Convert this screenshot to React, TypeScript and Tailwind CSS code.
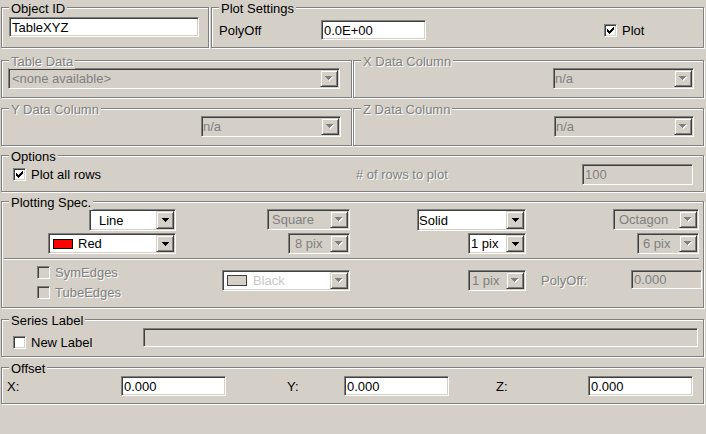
import React from "react";

const SUNKEN =
  "border border-t-[#808080] border-l-[#808080] border-b-white border-r-white shadow-[inset_1px_1px_0_#404040,inset_-1px_-1px_0_#d4d0c8]";
const RAISED =
  "border border-t-[#d4d0c8] border-l-[#d4d0c8] border-b-[#404040] border-r-[#404040] shadow-[inset_1px_1px_0_#fff,inset_-1px_-1px_0_#808080] bg-[#d4d0c8]";
const ETCHED =
  "relative border border-[#808080] shadow-[1px_1px_0_#fff,inset_1px_1px_0_#fff]";
const DIS_TEXT = "text-[#808080] [text-shadow:1px_1px_0_#fff]";

function Group({
  label,
  disabled,
  className = "",
  children,
}: {
  label: string;
  disabled?: boolean;
  className?: string;
  children?: React.ReactNode;
}) {
  return (
    <div className={`${ETCHED} ${className}`}>
      <span
        className={`absolute left-[7px] top-[-7px] px-[2px] bg-[#d4d0c8] whitespace-nowrap ${
          disabled ? DIS_TEXT : "text-black"
        }`}
      >
        {label}
      </span>
      {children}
    </div>
  );
}

function Arrow({ disabled }: { disabled?: boolean }) {
  if (disabled) {
    return (
      <svg width="8" height="5" viewBox="0 0 8 5" shapeRendering="crispEdges">
        <polygon points="1,1 8,1 5,5 4,5" fill="#ffffff" />
        <polygon points="0,0 7,0 4,4 3,4" fill="#808080" />
      </svg>
    );
  }
  return (
    <svg width="7" height="4" viewBox="0 0 7 4" shapeRendering="crispEdges">
      <polygon points="0,0 7,0 4,4 3,4" fill="#000000" />
    </svg>
  );
}

function Combo({
  className = "",
  text,
  disabled,
  white,
  pl = "",
  swatch,
}: {
  className?: string;
  text: string;
  disabled?: boolean;
  white?: boolean;
  pl?: string;
  swatch?: React.ReactNode;
}) {
  const bg = disabled && !white ? "bg-[#d4d0c8]" : "bg-white";
  const tc = disabled ? (white ? "text-[#c8c8c8]" : "text-[#808080]") : "text-black";
  return (
    <div className={`${SUNKEN} ${bg} p-[1px] flex shrink-0 ${className}`}>
      <div
        className={`flex-1 min-w-0 flex items-center overflow-hidden whitespace-nowrap ${pl} ${tc}`}
      >
        {swatch}
        {text}
      </div>
      <div className={`${RAISED} w-[18px] shrink-0 flex items-center justify-center`}>
        <Arrow disabled={disabled} />
      </div>
    </div>
  );
}

function Field({
  className = "",
  value,
  disabled,
}: {
  className?: string;
  value: string;
  disabled?: boolean;
}) {
  return (
    <div
      className={`${SUNKEN} flex items-center shrink-0 pl-[2px] whitespace-nowrap overflow-hidden ${
        disabled ? "bg-[#d4d0c8] text-[#808080]" : "bg-white text-black"
      } ${className}`}
    >
      {value}
    </div>
  );
}

function Check({ checked, disabled }: { checked?: boolean; disabled?: boolean }) {
  return (
    <div
      className={`${SUNKEN} w-[13px] h-[13px] shrink-0 flex items-center justify-center ${
        disabled ? "bg-[#d4d0c8]" : "bg-white"
      }`}
    >
      {checked && (
        <svg width="7" height="7" viewBox="0 0 7 7" shapeRendering="crispEdges">
          <rect x="6" y="0" width="1" height="1" fill="#000" />
          <rect x="5" y="1" width="2" height="1" fill="#000" />
          <rect x="0" y="2" width="1" height="1" fill="#000" />
          <rect x="4" y="2" width="3" height="1" fill="#000" />
          <rect x="0" y="3" width="2" height="1" fill="#000" />
          <rect x="3" y="3" width="3" height="1" fill="#000" />
          <rect x="0" y="4" width="5" height="1" fill="#000" />
          <rect x="1" y="5" width="3" height="1" fill="#000" />
          <rect x="2" y="6" width="1" height="1" fill="#000" />
        </svg>
      )}
    </div>
  );
}

export default function App() {
  return (
    <div className="w-[706px] h-[434px] overflow-hidden bg-[#d4d0c8] pl-[1px] pt-[7px] text-[13px] leading-[15px] text-black font-['Liberation_Sans',Arial,sans-serif]">
      {/* Row 1 */}
      <div className="flex">
        <Group label="Object ID" className="w-[208px] h-[41px]">
          <Field className="ml-[7px] mt-[9px] w-[190px] h-[20px]" value="TableXYZ" />
        </Group>
        <Group label="Plot Settings" className="ml-[2px] w-[493px] h-[41px]">
          <div className="flex items-center mt-[12px] h-[20px]">
            <span className="ml-[7px] w-[102px] shrink-0">PolyOff</span>
            <Field className="w-[105px] h-[20px]" value="0.0E+00" />
            <div className="ml-[178px]">
              <Check checked />
            </div>
            <span className="ml-[5px]">Plot</span>
          </div>
        </Group>
      </div>

      {/* Row 2 */}
      <div className="flex mt-[12px]">
        <Group label="Table Data" disabled className="w-[351px] h-[38px]">
          <Combo
            className="ml-[6px] mt-[7px] w-[332px] h-[21px]"
            text="<none available>"
            disabled
            pl="pl-[2px]"
          />
        </Group>
        <Group label="X Data Column" disabled className="ml-[1px] w-[351px] h-[38px]">
          <Combo className="ml-[199px] mt-[7px] w-[141px] h-[21px]" text="n/a" disabled />
        </Group>
      </div>

      {/* Row 3 */}
      <div className="flex mt-[10px]">
        <Group label="Y Data Column" disabled className="w-[351px] h-[38px]">
          <Combo className="ml-[199px] mt-[7px] w-[140px] h-[21px]" text="n/a" disabled />
        </Group>
        <Group label="Z Data Column" disabled className="ml-[1px] w-[351px] h-[38px]">
          <Combo className="ml-[200px] mt-[7px] w-[140px] h-[21px]" text="n/a" disabled />
        </Group>
      </div>

      {/* Options */}
      <Group label="Options" className="mt-[9px] w-[703px] h-[37px]">
        <div className="flex items-center mt-[8px] h-[21px]">
          <div className="ml-[11px]">
            <Check checked />
          </div>
          <span className="ml-[5px] w-[325px] shrink-0">Plot all rows</span>
          <span className={`w-[226px] shrink-0 ${DIS_TEXT}`}># of rows to plot</span>
          <Field className="w-[111px] h-[21px]" value="100" disabled />
        </div>
      </Group>

      {/* Plotting Spec. */}
      <Group label="Plotting Spec." className="mt-[9px] w-[703px] h-[107px]">
        <div className="flex items-start mt-[7px]">
          <Combo className="ml-[87px] w-[87px] h-[22px]" text="Line" pl="pl-[8px]" />
          <Combo className="ml-[91px] w-[83px] h-[21px]" text="Square" disabled pl="pl-[3px]" />
          <Combo className="ml-[67px] w-[109px] h-[22px]" text="Solid" />
          <Combo className="ml-[87px] w-[86px] h-[21px]" text="Octagon" disabled pl="pl-[4px]" />
        </div>
        <div className="flex items-start mt-[2px]">
          <Combo
            className="ml-[46px] w-[128px] h-[21px]"
            text="Red"
            pl="pl-[3px]"
            swatch={
              <span className="w-[20px] h-[10px] mr-[5px] shrink-0 bg-[#ff0000] border border-black" />
            }
          />
          <Combo className="ml-[112px] w-[62px] h-[21px]" text="8 pix" disabled pl="pl-[5px]" />
          <Combo className="ml-[118px] w-[58px] h-[21px]" text="1 pix" pl="pl-[1px]" />
          <Combo className="ml-[111px] w-[62px] h-[21px]" text="6 pix" disabled pl="pl-[4px]" />
        </div>
        <div className="ml-[2px] mt-[4px] w-[695px] h-[2px] border-t border-t-[#808080] border-b border-b-white" />
        <div className="flex items-start">
          <div className="ml-[35px] mt-[6px] w-[185px] shrink-0 flex flex-col gap-[7px]">
            <div className="flex items-center h-[13px]">
              <Check disabled />
              <span className={`ml-[5px] ${DIS_TEXT}`}>SymEdges</span>
            </div>
            <div className="flex items-center h-[13px]">
              <Check disabled />
              <span className={`ml-[5px] ${DIS_TEXT}`}>TubeEdges</span>
            </div>
          </div>
          <Combo
            className="mt-[10px] w-[128px] h-[21px]"
            text="Black"
            disabled
            white
            pl="pl-[3px]"
            swatch={
              <span className="w-[20px] h-[11px] mr-[6px] shrink-0 bg-[#d4d0c8] border border-[#404040]" />
            }
          />
          <Combo className="ml-[118px] mt-[10px] w-[58px] h-[21px]" text="1 pix" disabled pl="pl-[2px]" />
          <div className={`ml-[15px] mt-[10px] w-[90px] h-[20px] shrink-0 flex items-center ${DIS_TEXT}`}>
            PolyOff:
          </div>
          <Field className="mt-[10px] w-[71px] h-[19px]" value="0.000" disabled />
        </div>
      </Group>

      {/* Series Label */}
      <Group label="Series Label" className="mt-[11px] w-[703px] h-[38px]">
        <div className="flex items-start">
          <div className="ml-[11px] mt-[16px] w-[130px] shrink-0 flex items-center h-[13px]">
            <Check />
            <span className="ml-[5px] whitespace-nowrap">New Label</span>
          </div>
          <Field className="mt-[8px] w-[555px] h-[19px]" value="" disabled />
        </div>
      </Group>

      {/* Offset */}
      <Group label="Offset" className="mt-[10px] w-[703px] h-[37px]">
        <div className="flex items-center mt-[8px] h-[20px]">
          <span className="ml-[5px] w-[114px] shrink-0">X:</span>
          <Field className="w-[105px] h-[20px]" value="0.000" />
          <span className="ml-[61px] w-[57px] shrink-0">Y:</span>
          <Field className="w-[105px] h-[20px]" value="0.000" />
          <span className="ml-[47px] w-[92px] shrink-0">Z:</span>
          <Field className="w-[105px] h-[20px]" value="0.000" />
        </div>
      </Group>
    </div>
  );
}
